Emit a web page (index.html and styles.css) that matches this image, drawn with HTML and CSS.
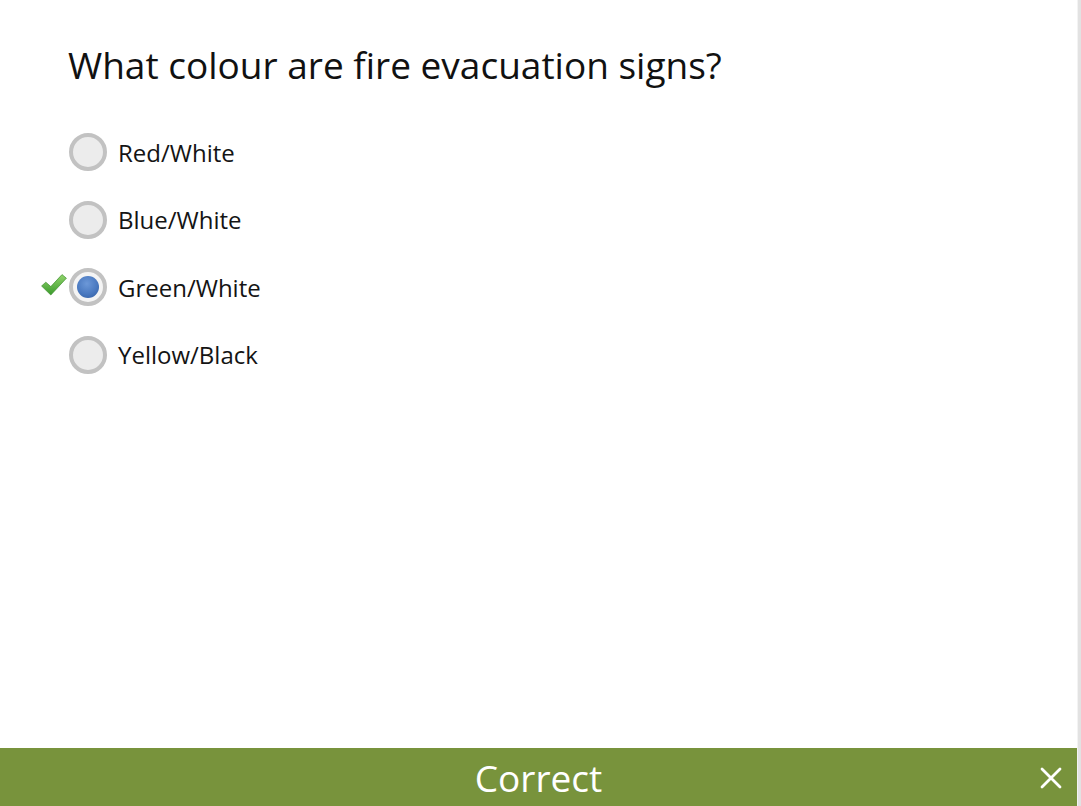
FILE: index.html
```html
<!DOCTYPE html>
<html lang="en">
<head>
<meta charset="utf-8">
<title>Quiz</title>
<link rel="stylesheet" href="styles.css">
</head>
<body>
<div class="page">
  <main class="content">
    <h1 class="question">What colour are fire evacuation signs?</h1>
    <ul class="options">
      <li class="option">
        <span class="mark"></span>
        <span class="radio"></span>
        <span class="label">Red/White</span>
      </li>
      <li class="option">
        <span class="mark"></span>
        <span class="radio"></span>
        <span class="label">Blue/White</span>
      </li>
      <li class="option">
        <span class="mark">
          <svg width="26" height="22" viewBox="0 0 26 22">
            <defs>
              <linearGradient id="g" x1="0" y1="0" x2="0" y2="1">
                <stop offset="0" stop-color="#92d56c"/>
                <stop offset="1" stop-color="#3a9a2c"/>
              </linearGradient>
            </defs>
            <path d="M0.6 12 L4.8 8.2 L9.8 12.6 L21 0.6 L25.4 4.2 L9.8 21 Z" fill="url(#g)" stroke="#3f8f2f" stroke-width="0.7" stroke-linejoin="round"/>
          </svg>
        </span>
        <span class="radio selected"><span class="dot"></span></span>
        <span class="label">Green/White</span>
      </li>
      <li class="option">
        <span class="mark"></span>
        <span class="radio"></span>
        <span class="label">Yellow/Black</span>
      </li>
    </ul>
  </main>
  <footer class="feedback">
    <span class="feedback-text">Correct</span>
    <button class="close" aria-label="Close">
      <svg width="22" height="22" viewBox="0 0 22 22">
        <path d="M2 2 L20 20 M20 2 L2 20" stroke="#ffffff" stroke-width="2.8" stroke-linecap="round"/>
      </svg>
    </button>
  </footer>
</div>
<div class="edge"></div>
</body>
</html>
```

FILE: styles.css
```css
html, body {
  margin: 0;
  padding: 0;
  height: 100%;
}
body {
  display: flex;
  background: #ffffff;
  font-family: "Open Sans", "Noto Sans", sans-serif;
  color: #111111;
  overflow: hidden;
}
.page {
  flex: 1;
  display: flex;
  flex-direction: column;
  height: 806px;
}
.edge {
  width: 3px;
  height: 806px;
  background: #e2e2e2;
  border-left: 1px solid #f3f3f3;
}
.content {
  flex: 1;
  padding: 40px 0 0 68px;
}
.question {
  margin: 0;
  font-weight: 400;
  font-size: 37px;
  line-height: 50px;
  letter-spacing: 0;
  color: #111111;
}
.options {
  list-style: none;
  margin: 43px 0 0 -31px;
  padding: 0;
  display: flex;
  flex-direction: column;
  gap: 29.5px;
}
.option {
  display: flex;
  align-items: center;
  height: 38px;
}
.mark {
  width: 26px;
  height: 22px;
  margin-left: 4px;
  margin-right: 2px;
  display: flex;
  align-items: center;
  justify-content: center;
  margin-top: -5px;
}
.radio {
  box-sizing: border-box;
  width: 38px;
  height: 38px;
  border-radius: 50%;
  border: 4px solid #c2c2c2;
  background: #ececec;
  display: flex;
  align-items: center;
  justify-content: center;
}
.radio.selected {
  background: #f4f4f4;
}
.dot {
  width: 22px;
  height: 22px;
  border-radius: 50%;
  background: radial-gradient(circle at 45% 35%, #6c98d8 0%, #4a79c0 55%, #2f5b9f 100%);
}
.label {
  margin-left: 11px;
  font-size: 24px;
  color: #141414;
}
.feedback {
  height: 58px;
  background: #78933c;
  display: flex;
  align-items: center;
  justify-content: center;
  position: relative;
}
.feedback-text {
  color: #ffffff;
  font-size: 37px;
  line-height: 58px;
  margin-top: 2px;
}
.close {
  position: absolute;
  right: 15px;
  top: 19px;
  width: 22px;
  height: 22px;
  padding: 0;
  border: 0;
  background: transparent;
  display: flex;
}
```
